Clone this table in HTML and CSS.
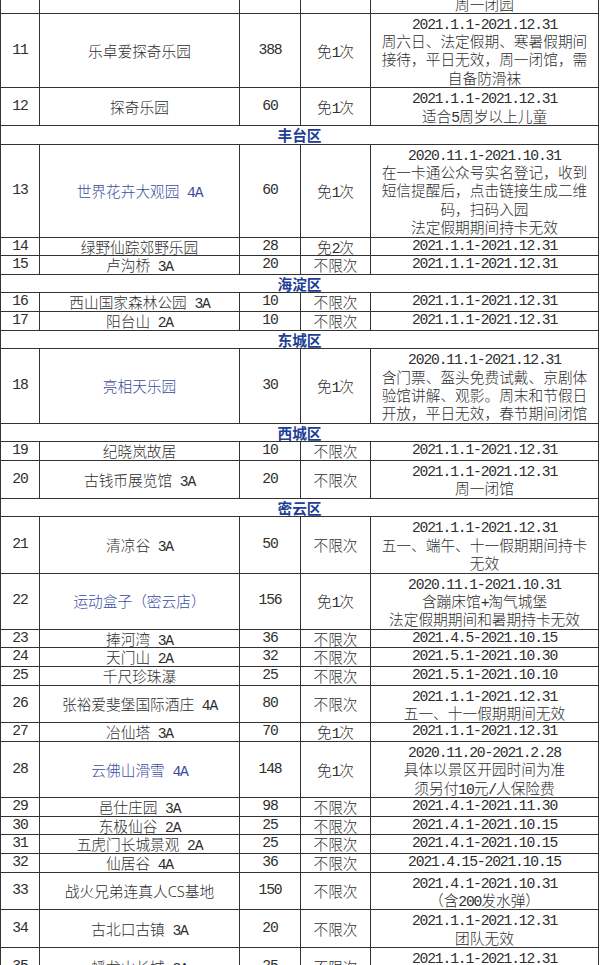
FILE: index.html
```html
<!DOCTYPE html>
<html lang="zh-CN">
<head>
<meta charset="utf-8">
<title>景区列表</title>
<link rel="stylesheet" href="styles.css">
</head>
<body>
<div class="sheet">
<table class="grid">
<colgroup>
<col class="c-no"><col class="c-name"><col class="c-price"><col class="c-times"><col class="c-date">
</colgroup>
<tbody>
<tr><td></td><td></td><td></td><td></td><td>周一闭园</td></tr>
<tr><td class="en">11</td><td>乐卓爱探奇乐园</td><td class="en">388</td><td>免<span class="en">1</span>次</td><td class="multi"><span class="en">2021.1.1-2021.12.31</span><br>周六日、法定假期、寒暑假期间<br>接待，平日无效，周一闭馆，需<br>自备防滑袜</td></tr>
<tr><td class="en">12</td><td>探奇乐园</td><td class="en">60</td><td>免<span class="en">1</span>次</td><td class="multi"><span class="en">2021.1.1-2021.12.31</span><br>适合<span class="en">5</span>周岁以上儿童</td></tr>
<tr class="area"><td colspan="5">丰台区</td></tr>
<tr><td class="en">13</td><td class="blue">世界花卉大观园<span class="en"> 4A</span></td><td class="en">60</td><td>免<span class="en">1</span>次</td><td class="multi"><span class="en">2020.11.1-2021.10.31</span><br>在一卡通公众号实名登记，收到<br>短信提醒后，点击链接生成二维<br>码，扫码入园<br>法定假期期间持卡无效</td></tr>
<tr><td class="en">14</td><td>绿野仙踪郊野乐园</td><td class="en">28</td><td>免<span class="en">2</span>次</td><td class="en">2021.1.1-2021.12.31</td></tr>
<tr><td class="en">15</td><td>卢沟桥<span class="en"> 3A</span></td><td class="en">20</td><td>不限次</td><td class="en">2021.1.1-2021.12.31</td></tr>
<tr class="area"><td colspan="5">海淀区</td></tr>
<tr><td class="en">16</td><td>西山国家森林公园<span class="en"> 3A</span></td><td class="en">10</td><td>不限次</td><td class="en">2021.1.1-2021.12.31</td></tr>
<tr><td class="en">17</td><td>阳台山<span class="en"> 2A</span></td><td class="en">10</td><td>不限次</td><td class="en">2021.1.1-2021.12.31</td></tr>
<tr class="area"><td colspan="5">东城区</td></tr>
<tr><td class="en">18</td><td class="blue">亮相天乐园</td><td class="en">30</td><td>免<span class="en">1</span>次</td><td class="multi"><span class="en">2020.11.1-2021.12.31</span><br>含门票、盔头免费试戴、京剧体<br>验馆讲解、观影。周末和节假日<br>开放，平日无效，春节期间闭馆</td></tr>
<tr class="area"><td colspan="5">西城区</td></tr>
<tr><td class="en">19</td><td>纪晓岚故居</td><td class="en">10</td><td>不限次</td><td class="en">2021.1.1-2021.12.31</td></tr>
<tr><td class="en">20</td><td>古钱币展览馆<span class="en"> 3A</span></td><td class="en">20</td><td>不限次</td><td class="multi"><span class="en">2021.1.1-2021.12.31</span><br>周一闭馆</td></tr>
<tr class="area"><td colspan="5">密云区</td></tr>
<tr><td class="en">21</td><td>清凉谷<span class="en"> 3A</span></td><td class="en">50</td><td>不限次</td><td class="multi"><span class="en">2021.1.1-2021.12.31</span><br>五一、端午、十一假期期间持卡<br>无效</td></tr>
<tr><td class="en">22</td><td class="blue">运动盒子（密云店）</td><td class="en">156</td><td>免<span class="en">1</span>次</td><td class="multi"><span class="en">2020.11.1-2021.10.31</span><br>含蹦床馆<span class="en">+</span>淘气城堡<br>法定假期期间和暑期持卡无效</td></tr>
<tr><td class="en">23</td><td>捧河湾<span class="en"> 3A</span></td><td class="en">36</td><td>不限次</td><td class="en">2021.4.5-2021.10.15</td></tr>
<tr><td class="en">24</td><td>天门山<span class="en"> 2A</span></td><td class="en">32</td><td>不限次</td><td class="en">2021.5.1-2021.10.30</td></tr>
<tr><td class="en">25</td><td>千尺珍珠瀑</td><td class="en">25</td><td>不限次</td><td class="en">2021.5.1-2021.10.10</td></tr>
<tr><td class="en">26</td><td>张裕爱斐堡国际酒庄<span class="en"> 4A</span></td><td class="en">80</td><td>不限次</td><td class="multi"><span class="en">2021.1.1-2021.12.31</span><br>五一、十一假期期间无效</td></tr>
<tr><td class="en">27</td><td>冶仙塔<span class="en"> 3A</span></td><td class="en">70</td><td>免<span class="en">1</span>次</td><td class="en">2021.1.1-2021.12.31</td></tr>
<tr><td class="en">28</td><td class="blue">云佛山滑雪<span class="en"> 4A</span></td><td class="en">148</td><td>免<span class="en">1</span>次</td><td class="multi"><span class="en">2020.11.20-2021.2.28</span><br>具体以景区开园时间为准<br>须另付<span class="en">10</span>元<span class="en">/</span>人保险费</td></tr>
<tr><td class="en">29</td><td>邑仕庄园<span class="en"> 3A</span></td><td class="en">98</td><td>不限次</td><td class="en">2021.4.1-2021.11.30</td></tr>
<tr><td class="en">30</td><td>东极仙谷<span class="en"> 2A</span></td><td class="en">25</td><td>不限次</td><td class="en">2021.4.1-2021.10.15</td></tr>
<tr><td class="en">31</td><td>五虎门长城景观<span class="en"> 2A</span></td><td class="en">25</td><td>不限次</td><td class="en">2021.4.1-2021.10.15</td></tr>
<tr><td class="en">32</td><td>仙居谷<span class="en"> 4A</span></td><td class="en">36</td><td>不限次</td><td class="en">2021.4.15-2021.10.15</td></tr>
<tr><td class="en">33</td><td>战火兄弟连真人<span class="lat">CS</span>基地</td><td class="en">150</td><td>不限次</td><td class="multi"><span class="en">2021.4.1-2021.10.31</span><br>（含<span class="en">200</span>发水弹）</td></tr>
<tr><td class="en">34</td><td>古北口古镇<span class="en"> 3A</span></td><td class="en">20</td><td>不限次</td><td class="multi"><span class="en">2021.1.1-2021.12.31</span><br>团队无效</td></tr>
<tr><td class="en">35</td><td>蟠龙山长城<span class="en"> 3A</span></td><td class="en">25</td><td>不限次</td><td class="multi"><span class="en">2021.1.1-2021.12.31</span><br>周一闭园</td></tr>
</tbody>
</table>
</div>
</body>
</html>
```
FILE: styles.css
```css
html, body {
  margin: 0;
  padding: 0;
  background: #ffffff;
}

.sheet {
  width: 600px;
  height: 965px;
  overflow: hidden;
}

.grid {
  width: 599px;
  margin-top: -6px;
  border-collapse: collapse;
  table-layout: fixed;
  font-family: "Noto Sans CJK SC", "Noto Sans", sans-serif;
  font-weight: 300;
  font-size: 14.7px;
  line-height: 17.6px;
  color: #2e2e2e;
}

.c-no { width: 39px; }
.c-name { width: 200px; }
.c-price { width: 61px; }
.c-times { width: 70px; }

.grid td {
  border: 1px solid #333333;
  padding: 0;
  text-align: center;
  vertical-align: middle;
  white-space: nowrap;
  overflow: hidden;
}

.grid td.multi {
  line-height: 18.4px;
}

.en {
  font-family: "Liberation Mono", monospace;
  letter-spacing: -0.08em;
}

span.en,
span.lat {
  line-height: 0;
}

.lat {
  font-family: "Noto Sans", sans-serif;
}

.grid td.blue {
  color: #3b4c9e;
}

.area td {
  color: #213d96;
  font-weight: 700;
}
```
